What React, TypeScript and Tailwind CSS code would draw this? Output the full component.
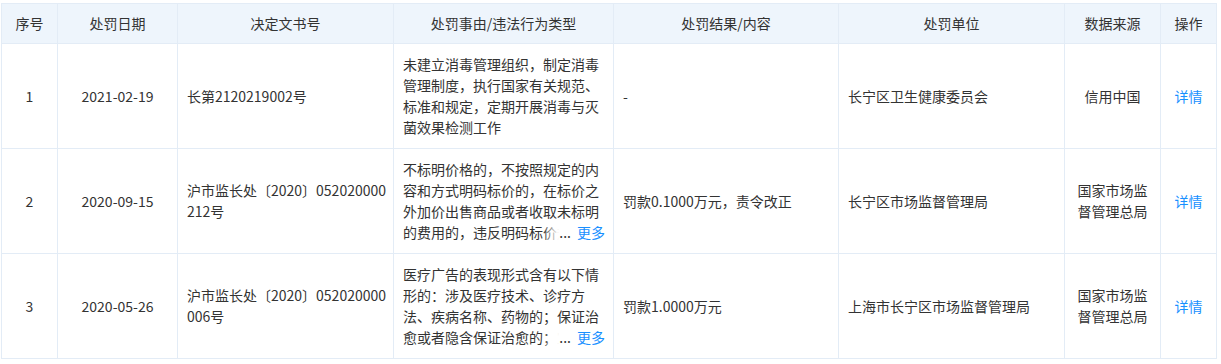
import React from "react";

interface Row {
  no: number; date: string; docNo: string; reason: string; more: boolean;
  result: string; org: string; source: string;
}

const ROWS: Row[] = [
  {
    no: 1, date: "2021-02-19", docNo: "长第2120219002号",
    reason: "未建立消毒管理组织，制定消毒管理制度，执行国家有关规范、标准和规定，定期开展消毒与灭菌效果检测工作",
    more: false, result: "-", org: "长宁区卫生健康委员会", source: "信用中国",
  },
  {
    no: 2, date: "2020-09-15", docNo: "沪市监长处〔2020〕052020000212号",
    reason: "不标明价格的，不按照规定的内容和方式明码标价的，在标价之外加价出售商品或者收取未标明的费用的，违反明码标价规定的行为",
    more: true, result: "罚款0.1000万元，责令改正", org: "长宁区市场监督管理局", source: "国家市场监督管理总局",
  },
  {
    no: 3, date: "2020-05-26", docNo: "沪市监长处〔2020〕052020000006号",
    reason: "医疗广告的表现形式含有以下情形的：涉及医疗技术、诊疗方法、疾病名称、药物的；保证治愈或者隐含保证治愈的；宣传治愈率、有效率等诊疗效果的",
    more: true, result: "罚款1.0000万元", org: "上海市长宁区市场监督管理局", source: "国家市场监督管理总局",
  },
];

const HEADERS = ["序号", "处罚日期", "决定文书号", "处罚事由/违法行为类型", "处罚结果/内容", "处罚单位", "数据来源", "操作"];
const WIDTHS = [56, 120, 216, 220, 225, 226, 96, 56];

const cell = "border border-[#e3ecf6] py-[10px] align-middle";

function Reason({ text, more }: { text: string; more: boolean }) {
  return (
    <div className="relative w-[202px]">
      <div className="line-clamp-4">{text}</div>
      {more && (
        <div className="absolute right-0 bottom-0 flex items-center bg-white">
          <span className="w-4 h-[21px] -ml-4 bg-gradient-to-r from-white/0 to-white" />
          <span className="pr-1.5">...</span>
          <a className="text-[#1890ff] cursor-pointer">更多</a>
        </div>
      )}
    </div>
  );
}

export default function App() {
  return (
    <div className="pt-[3px] pl-px bg-white font-['Noto_Sans_CJK_SC',sans-serif] text-[14px] leading-[21px] text-[#333]">
      <table className="table-fixed border-collapse w-[1216px]">
        <colgroup>
          {WIDTHS.map((w, i) => <col key={i} style={{ width: w }} />)}
        </colgroup>
        <thead>
          <tr className="bg-[#eef5fc]">
            {HEADERS.map((h) => (
              <th key={h} className="border border-[#e3ecf6] h-10 font-normal text-center">{h}</th>
            ))}
          </tr>
        </thead>
        <tbody>
          {ROWS.map((r) => (
            <tr key={r.no}>
              <td className={`${cell} text-center`}>{r.no}</td>
              <td className={`${cell} text-center`}>{r.date}</td>
              <td className={`${cell} pl-[9px] pr-0`}>
                <div className="w-[203px] break-all">{r.docNo}</div>
              </td>
              <td className={`${cell} pl-[9px]`}><Reason text={r.reason} more={r.more} /></td>
              <td className={`${cell} px-[9px]`}>{r.result}</td>
              <td className={`${cell} px-[9px]`}>{r.org}</td>
              <td className={`${cell} px-[10px] text-center`}>{r.source}</td>
              <td className={`${cell} text-center`}>
                <a className="text-[#1890ff] cursor-pointer">详情</a>
              </td>
            </tr>
          ))}
        </tbody>
      </table>
    </div>
  );
}
